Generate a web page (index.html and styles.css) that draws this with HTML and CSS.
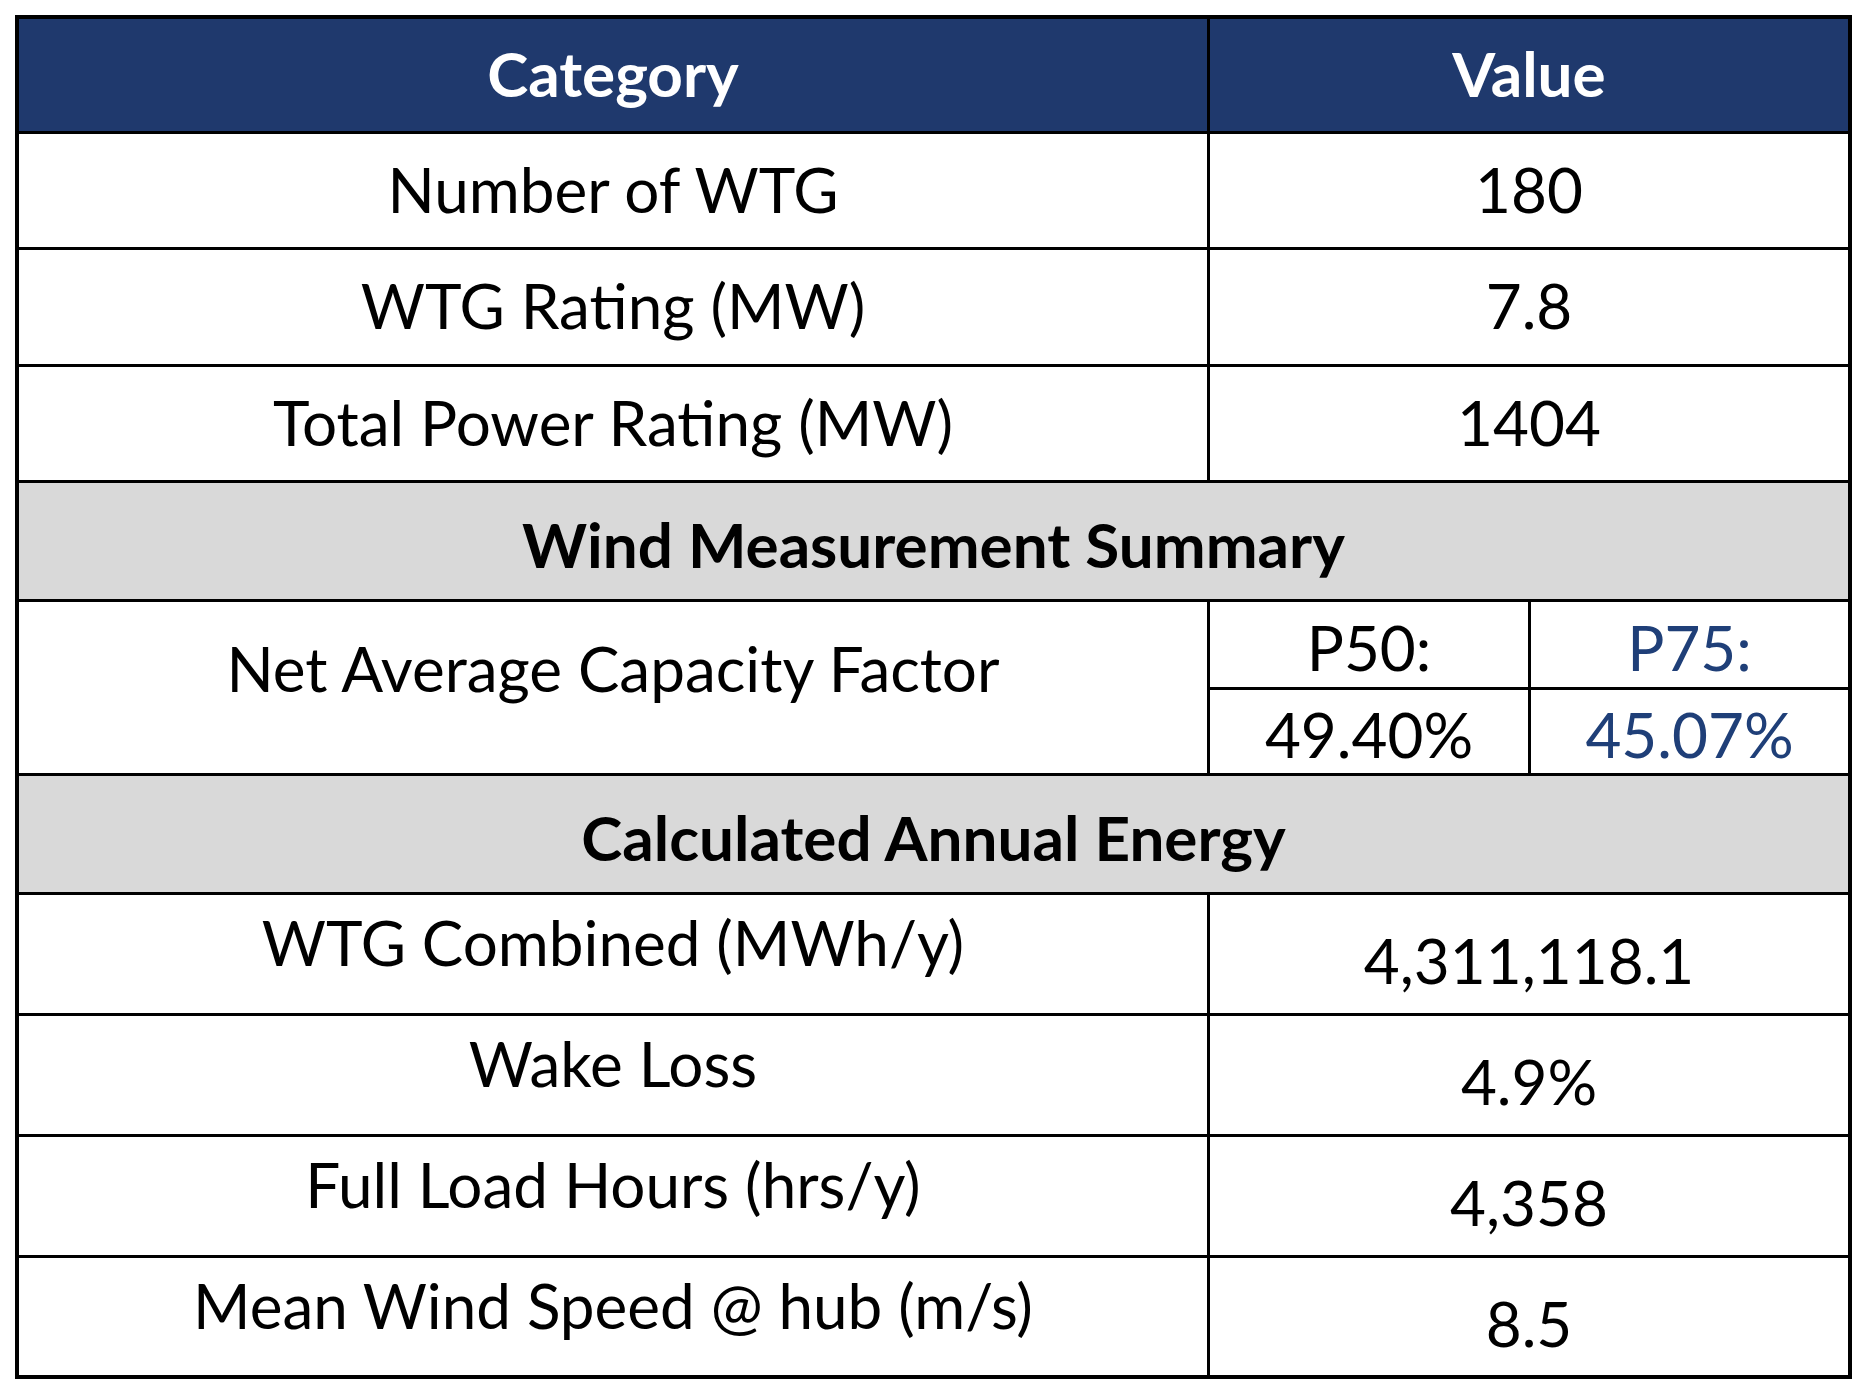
FILE: index.html
```html
<!DOCTYPE html>
<html lang="en">
<head>
<meta charset="utf-8">
<title>Wind Farm Summary</title>
<link rel="stylesheet" href="styles.css">
</head>
<body>
<div class="sheet">
  <div class="cell head">Category</div>
  <div class="cell head span2">Value</div>

  <div class="cell">Number of WTG</div>
  <div class="cell span2">180</div>

  <div class="cell">WTG Rating (MW)</div>
  <div class="cell span2">7.8</div>

  <div class="cell">Total Power Rating (MW)</div>
  <div class="cell span2">1404</div>

  <div class="cell section span3">Wind Measurement Summary</div>

  <div class="cell rows2 up-lg">Net Average Capacity Factor</div>
  <div class="cell down-sm">P50:</div>
  <div class="cell down-sm blue">P75:</div>
  <div class="cell down-sm">49.40%</div>
  <div class="cell down-sm blue">45.07%</div>

  <div class="cell section span3">Calculated Annual Energy</div>

  <div class="cell up">WTG Combined (MWh/y)</div>
  <div class="cell span2 down">4,311,118.1</div>

  <div class="cell up">Wake Loss</div>
  <div class="cell span2 down">4.9%</div>

  <div class="cell up">Full Load Hours (hrs/y)</div>
  <div class="cell span2 down">4,358</div>

  <div class="cell up">Mean Wind Speed @ hub (m/s)</div>
  <div class="cell span2 down">8.5</div>
</div>
</body>
</html>
```
FILE: styles.css
```css
html, body {
  margin: 0;
  padding: 0;
  background: #ffffff;
}

body {
  padding: 15px;
  font-family: "Lato", "Liberation Sans", sans-serif;
  color: #000000;
}

.sheet {
  display: grid;
  width: 1837px;
  box-sizing: border-box;
  padding: 4px;
  gap: 3px;
  background: #000000;
  grid-template-columns: 1188px 318px 317px;
  grid-template-rows: 112px 113px 114px 113px 116px 85px 83px 116px 118px 118px 118px 117px;
}

.cell {
  background: #ffffff;
  display: flex;
  align-items: center;
  justify-content: center;
  font-size: 62px;
  line-height: 1;
  white-space: nowrap;
  box-sizing: border-box;
  padding-bottom: 4px;
}

.head {
  background: #1f396d;
  color: #ffffff;
  font-weight: 700;
}

.section {
  background: #d9d9d9;
  font-weight: 700;
  padding-top: 10px;
}

.span2 { grid-column: span 2; }
.span3 { grid-column: span 3; }
.rows2 { grid-row: span 2; }

.blue { color: #1f3f78; }

.up { padding-bottom: 24px; }
.up-lg { padding-bottom: 40px; }
.down { padding-top: 16px; }
.down-sm { padding-top: 9px; }
```
